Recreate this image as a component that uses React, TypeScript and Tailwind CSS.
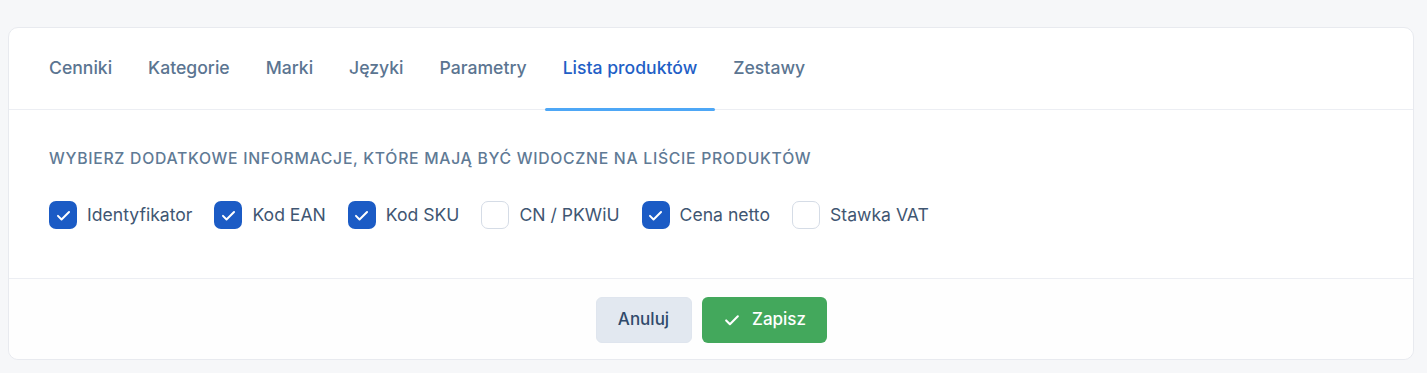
import { useState } from "react";

const tabs = ["Cenniki", "Kategorie", "Marki", "Języki", "Parametry", "Lista produktów", "Zestawy"];

const fields = [
  { label: "Identyfikator", checked: true },
  { label: "Kod EAN", checked: true },
  { label: "Kod SKU", checked: true },
  { label: "CN / PKWiU", checked: false },
  { label: "Cena netto", checked: true },
  { label: "Stawka VAT", checked: false },
];

function CheckIcon({ className }: { className?: string }) {
  return (
    <svg viewBox="0 0 24 24" fill="none" stroke="currentColor" strokeWidth={2.5} strokeLinecap="round" strokeLinejoin="round" className={className}>
      <path d="M5 12.5l4.5 4.5L19 7.5" />
    </svg>
  );
}

export default function App() {
  const [active, setActive] = useState("Lista produktów");
  const [values, setValues] = useState(fields.map((f) => f.checked));

  return (
    <div className="min-h-[373px] w-full bg-[#f6f7f9] pl-[8px] pr-[13px] pt-[27px] pb-[12px] font-['Inter',sans-serif]">
      <div className="rounded-[10px] border border-[#e8eaef] bg-white">
        <nav className="flex px-[22px] border-b border-[#eceef3] h-[82px]">
          {tabs.map((t) => (
            <button
              key={t}
              onClick={() => setActive(t)}
              className={
                t === active
                  ? "relative px-[18px] text-[17.6px] font-medium text-[#1f5fc6]"
                  : "relative px-[18px] text-[17.6px] font-medium text-[#5b7591]"
              }
            >
              {t}
              {t === active && (
                <span className="absolute left-0 right-0 -bottom-[2px] h-[3px] rounded-full bg-[#4ea7f6]" />
              )}
            </button>
          ))}
        </nav>

        <div className="px-[40px] pt-[38px] pb-[49px] border-b border-[#eceef3]">
          <p className="text-[15.75px] font-medium uppercase tracking-[0.045em] text-[#5f7a95] leading-[22px]">
            Wybierz dodatkowe informacje, które mają być widoczne na liście produktów
          </p>
          <div className="mt-[31px] flex items-center gap-[22px]">
            {fields.map((f, i) => (
              <label key={f.label} className="flex items-center gap-[10px] cursor-pointer">
                <span
                  onClick={() => setValues(values.map((v, j) => (j === i ? !v : v)))}
                  className={
                    values[i]
                      ? "flex h-[28px] w-[28px] items-center justify-center rounded-[7px] bg-[#1b5bc5] text-white"
                      : "flex h-[28px] w-[28px] items-center justify-center rounded-[7px] border border-[#d5dce6] bg-white"
                  }
                >
                  {values[i] && <CheckIcon className="h-[19px] w-[19px]" />}
                </span>
                <span className="text-[17.6px] leading-[28px] text-[#3f5672]">{f.label}</span>
              </label>
            ))}
          </div>
        </div>

        <div className="flex justify-center gap-[10px] pt-[18px] pb-[16px] rounded-b-[10px] bg-[#fefefe]">
          <button className="h-[46px] w-[96px] rounded-[6px] border border-[#dfe5ee] bg-[#e2e8f0] text-[17px] font-medium text-[#2f4a6b]">
            Anuluj
          </button>
          <button className="flex h-[46px] w-[125px] items-center justify-center gap-[10px] rounded-[6px] bg-[#43a85c] text-[17px] font-medium text-white">
            <CheckIcon className="h-[20px] w-[20px]" />
            Zapisz
          </button>
        </div>
      </div>
    </div>
  );
}
